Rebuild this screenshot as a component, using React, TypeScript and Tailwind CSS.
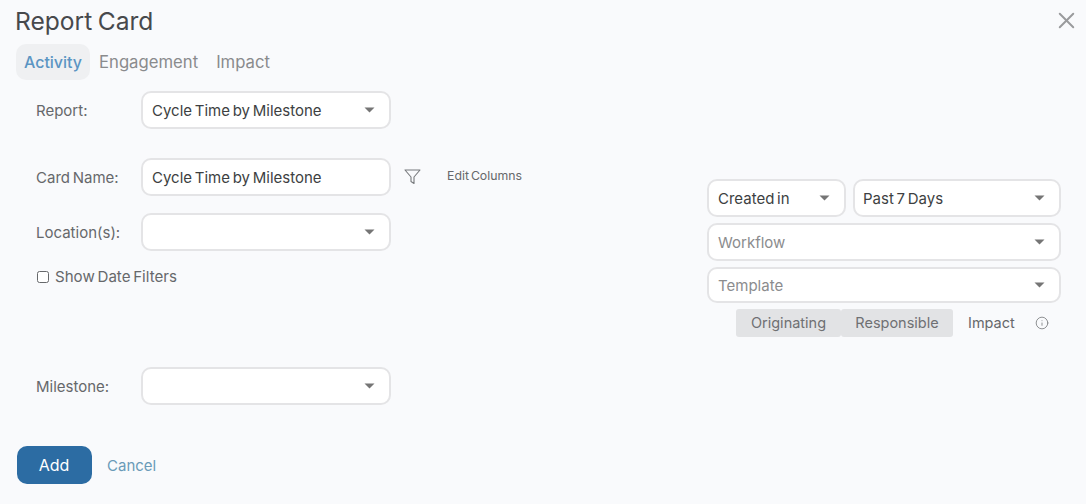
import React from 'react';
import { X, Info } from 'lucide-react';

const Caret: React.FC = () => (
  <svg width="11" height="6" viewBox="0 0 11 6" className="shrink-0">
    <path d="M0.5 0.5h10L5.5 5.5z" fill="#757575" />
  </svg>
);

const Select: React.FC<{ value?: string; placeholder?: string; className?: string }> = ({ value, placeholder, className }) => (
  <div className={`flex items-center justify-between bg-white border-2 border-[#e4e4e6] rounded-[10px] pl-[9px] pr-[14px] text-[15px] ${className}`}>
    <span className={`pt-[2px] ${value ? 'text-[#3d3f42]' : 'text-[#8b8c8e]'}`}>{value || placeholder}</span>
    <Caret />
  </div>
);

const FormRow: React.FC<{ label: string; className?: string; children: React.ReactNode }> = ({ label, className, children }) => (
  <div className={`flex items-center ${className}`}>
    <label className="w-[105px] pt-[3px] text-[15px] text-[#66686b]">{label}</label>
    {children}
  </div>
);

const App: React.FC = () => {
  return (
    <div className="w-[1086px] h-[504px] overflow-hidden bg-[#f9fafc] font-['Inter',sans-serif] [word-spacing:-1.5px]">
      <div className="flex items-start justify-between pl-[15px] pr-[6px] h-[44px] pt-[5px]">
        <h1 className="text-[24.6px] leading-[32px] text-[#47494c] font-normal">Report Card</h1>
        <X className="w-[27px] h-[27px] mt-[2px] text-[#9a9b9d]" strokeWidth={1.75} />
      </div>

      <div className="flex items-center h-[36px] pl-[16px] text-[16.7px]">
        <div className="h-[36px] w-[74px] flex items-center justify-center rounded-[10px] bg-[#eff0f2] text-[16px] text-[#5b95c3] font-medium">Activity</div>
        <div className="ml-[9px] pt-[2px] text-[#8a8b8d]">Engagement</div>
        <div className="ml-[18px] pt-[2px] text-[#8a8b8d]">Impact</div>
      </div>

      <div className="flex">
        <div className="w-[707px] pl-[36px] pt-[11px]">
          <FormRow label="Report:">
            <Select value="Cycle Time by Milestone" className="w-[250px] h-[38px]" />
          </FormRow>

          <FormRow label="Card Name:" className="mt-[29px]">
            <div className="w-[250px] h-[38px] flex items-center bg-white border-2 border-[#e4e4e6] rounded-[10px] pl-[9px] pt-[2px] text-[15px] text-[#3d3f42]">
              Cycle Time by Milestone
            </div>
            <svg width="17" height="16" viewBox="0 0 17 16" fill="none" className="ml-[13px] -mt-[1px]">
              <path d="M1 1h15l-6 7v6.5l-3-2V8z" stroke="#77797c" strokeWidth="1.1" strokeLinejoin="round" />
            </svg>
            <span className="ml-[26px] -mt-[1px] text-[12.3px] text-[#66686b]">Edit Columns</span>
          </FormRow>

          <FormRow label="Location(s):" className="mt-[17px]">
            <Select className="w-[250px] h-[38px]" />
          </FormRow>

          <div className="flex items-center mt-[18px] h-[16px]">
            <span className="w-[12px] h-[12px] ml-[1px] border border-[#66686b] rounded-[2.5px] bg-white" />
            <span className="ml-[6px] text-[15.1px] text-[#66686b]">Show Date Filters</span>
          </div>

          <FormRow label="Milestone:" className="mt-[82px]">
            <Select className="w-[250px] h-[38px]" />
          </FormRow>

          <div className="flex items-center -ml-[19px] mt-[41px]">
            <button className="w-[75px] h-[38px] pb-[1px] pr-[1px] rounded-[10px] bg-[#2c6ca3] text-white text-[16px]">Add</button>
            <a className="ml-[15px] mt-[2px] text-[15px] text-[#6a9ab8]">Cancel</a>
          </div>
        </div>

        <div className="w-[354px] pt-[99px] text-[15px]">
          <div className="flex gap-[7px]">
            <Select value="Created in" className="w-[139px] h-[38px]" />
            <Select value="Past 7 Days" className="w-[208px] h-[38px] !pl-[8px]" />
          </div>
          <Select placeholder="Workflow" className="w-[354px] h-[38px] mt-[6px]" />
          <Select placeholder="Template" className="w-[354px] h-[36px] mt-[6px]" />
          <div className="flex items-center mt-[6px] ml-[29px] h-[28px] text-[14.5px]">
            <div className="w-[105px] h-[28px] flex items-center justify-center bg-[#e2e3e5] rounded-[3px] text-[#6f7073]">Originating</div>
            <div className="w-[112px] h-[28px] flex items-center justify-center bg-[#e2e3e5] rounded-[3px] text-[#6f7073]">Responsible</div>
            <div className="ml-[15px] text-[#66686b]">Impact</div>
            <Info className="ml-[20px] w-[14px] h-[14px] text-[#77797c]" strokeWidth={1.4} />
          </div>
        </div>
      </div>
    </div>
  );
};

export default App;
